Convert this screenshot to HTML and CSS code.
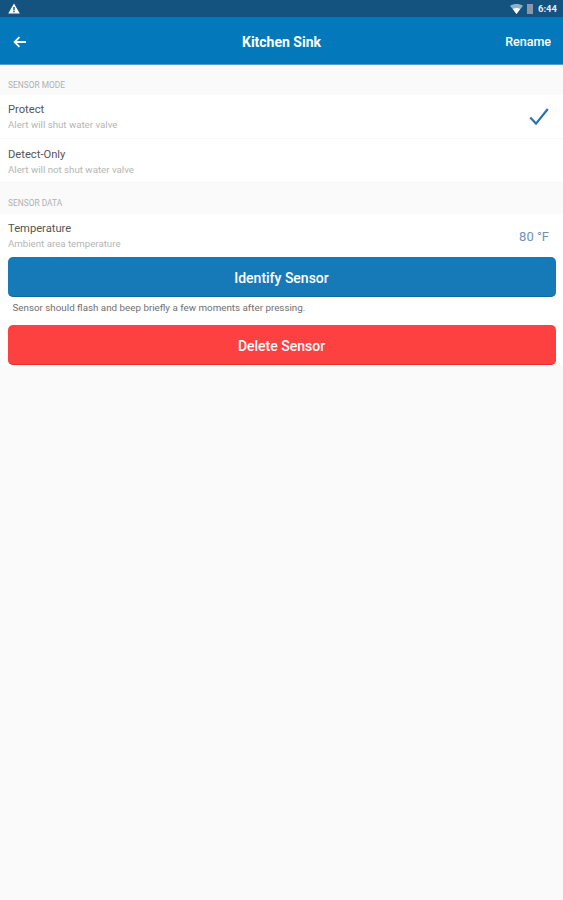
FILE: index.html
```html
<!DOCTYPE html>
<html>
    <head>
        <title>Kitchen Sink</title>
        <link rel="stylesheet" href="styles.css">
    </head>
    <body>
      <div class="statusBar">
        <svg class="alertIcon" width="12" height="11" viewBox="0 0 12 11">
          <path d="M6 0.5 L11.8 10.5 H0.2 Z" fill="#fff"/>
          <rect x="5.3" y="4" width="1.4" height="3.4" fill="#14527f"/>
          <rect x="5.3" y="8" width="1.4" height="1.3" fill="#14527f"/>
        </svg>
        <div class="statusRight">
          <svg class="wifi" width="13" height="10" viewBox="0 0 13 10">
            <path d="M0 1.8 C3.6 -0.6 9.4 -0.6 13 1.8 L6.5 10 Z" fill="#fff" opacity="0.55"/>
            <path d="M2.8 5 C5 3.6 8 3.6 10.2 5 L6.5 10 Z" fill="#fff"/>
          </svg>
          <span class="battery"></span>
          <span class="clock">6:44</span>
        </div>
      </div>

      <div class="header">
        <svg class="backArrow" width="14" height="12" viewBox="0 0 14 12">
          <path d="M13 6 H2 M6.4 1.2 L1.6 6 L6.4 10.8" fill="none" stroke="#fff" stroke-width="1.8"/>
        </svg>
        <span class="headerTitle">Kitchen Sink</span>
        <span class="headerAction">Rename</span>
      </div>

      <div class="sectionLabel">SENSOR MODE</div>
      <div class="row">
        <div>
          <div class="rowTitle">Protect</div>
          <div class="rowSub">Alert will shut water valve</div>
        </div>
        <svg class="check" width="20" height="18" viewBox="0 0 20 18">
          <path d="M1.2 9.6 L7 15.6 L18.8 1" fill="none" stroke="#2a72b5" stroke-width="2.2"/>
        </svg>
      </div>
      <div class="row detectRow">
        <div>
          <div class="rowTitle">Detect-Only</div>
          <div class="rowSub">Alert will not shut water valve</div>
        </div>
      </div>

      <div class="sectionLabel dataLabel">SENSOR DATA</div>
      <div class="row tempRow">
        <div>
          <div class="rowTitle">Temperature</div>
          <div class="rowSub">Ambient area temperature</div>
        </div>
        <span class="tempValue">80 °F</span>
      </div>

      <div class="actions">
        <div class="btn btnBlue">Identify Sensor</div>
        <div class="hint">Sensor should flash and beep briefly a few moments after pressing.</div>
        <div class="btn btnRed">Delete Sensor</div>
      </div>
    </body>
</html>
```

FILE: styles.css
```css
* {
  box-sizing: border-box;
}

body {
  margin: 0;
  height: 900px;
  background: #fafafa;
  font-family: Roboto, "Liberation Sans", sans-serif;
}

/* Android status bar */
.statusBar {
  height: 17px;
  background: #14527f;
  display: flex;
  align-items: center;
  justify-content: space-between;
  padding: 0 6px 0 8px;
}

.statusRight {
  display: flex;
  align-items: center;
}

.wifi {
  margin-right: 4px;
}

.battery {
  width: 6px;
  height: 10px;
  margin-right: 5px;
  background: #8d97a8;
}

.clock {
  color: #e6edf3;
  font-size: 9.5px;
  font-weight: 700;
}

/* Top bar */
.header {
  height: 48px;
  background: #0379bb;
  border-bottom: 1px solid #5b9fd0;
  display: flex;
  align-items: center;
  justify-content: space-between;
  padding: 2px 12px 0 13px;
  color: #fff;
  position: relative;
}

.headerTitle {
  font-size: 14px;
  font-weight: 700;
  position: absolute;
  left: 0;
  right: 0;
  text-align: center;
}

.headerAction {
  font-size: 12.5px;
  font-weight: 500;
}

.sectionLabel {
  height: 30px;
  padding: 15px 0 0 8px;
  font-size: 8.4px;
  line-height: 10px;
  color: #b0b0b0;
}

.dataLabel {
  height: 31px;
}

/* List rows */
.row {
  height: 44px;
  background: #fff;
  border-bottom: 1px solid #f7f7f7;
  display: flex;
  align-items: center;
  justify-content: space-between;
  padding: 0 14px 0 8px;
}

.rowTitle {
  font-size: 11.2px;
  line-height: 14px;
  color: #555;
}

.rowSub {
  font-size: 9.7px;
  line-height: 12px;
  margin-top: 2px;
  color: #b5b5b5;
}

.detectRow {
  padding-top: 2px;
}

.tempRow {
  height: 43px;
  border-bottom: none;
}

.tempValue {
  font-size: 13px;
  color: #6a94b8;
  margin-top: 1px;
}

/* Buttons */
.actions {
  background: #fff;
  padding: 0 7.5px;
  height: 108px;
}

.btn {
  height: 40px;
  padding-top: 2px;
  border-radius: 5px;
  color: #fff;
  font-size: 14px;
  font-weight: 500;
  display: flex;
  align-items: center;
  justify-content: center;
}

.btnBlue {
  background: #177ab8;
  border-bottom: 1px solid #0f6aa3;
}

.btnRed {
  background: #fd4040;
  border-bottom: 1px solid #ee2a2a;
}

.hint {
  height: 28px;
  padding: 5px 0 0 5px;
  font-size: 9.8px;
  line-height: 12px;
  color: #707070;
}
```
